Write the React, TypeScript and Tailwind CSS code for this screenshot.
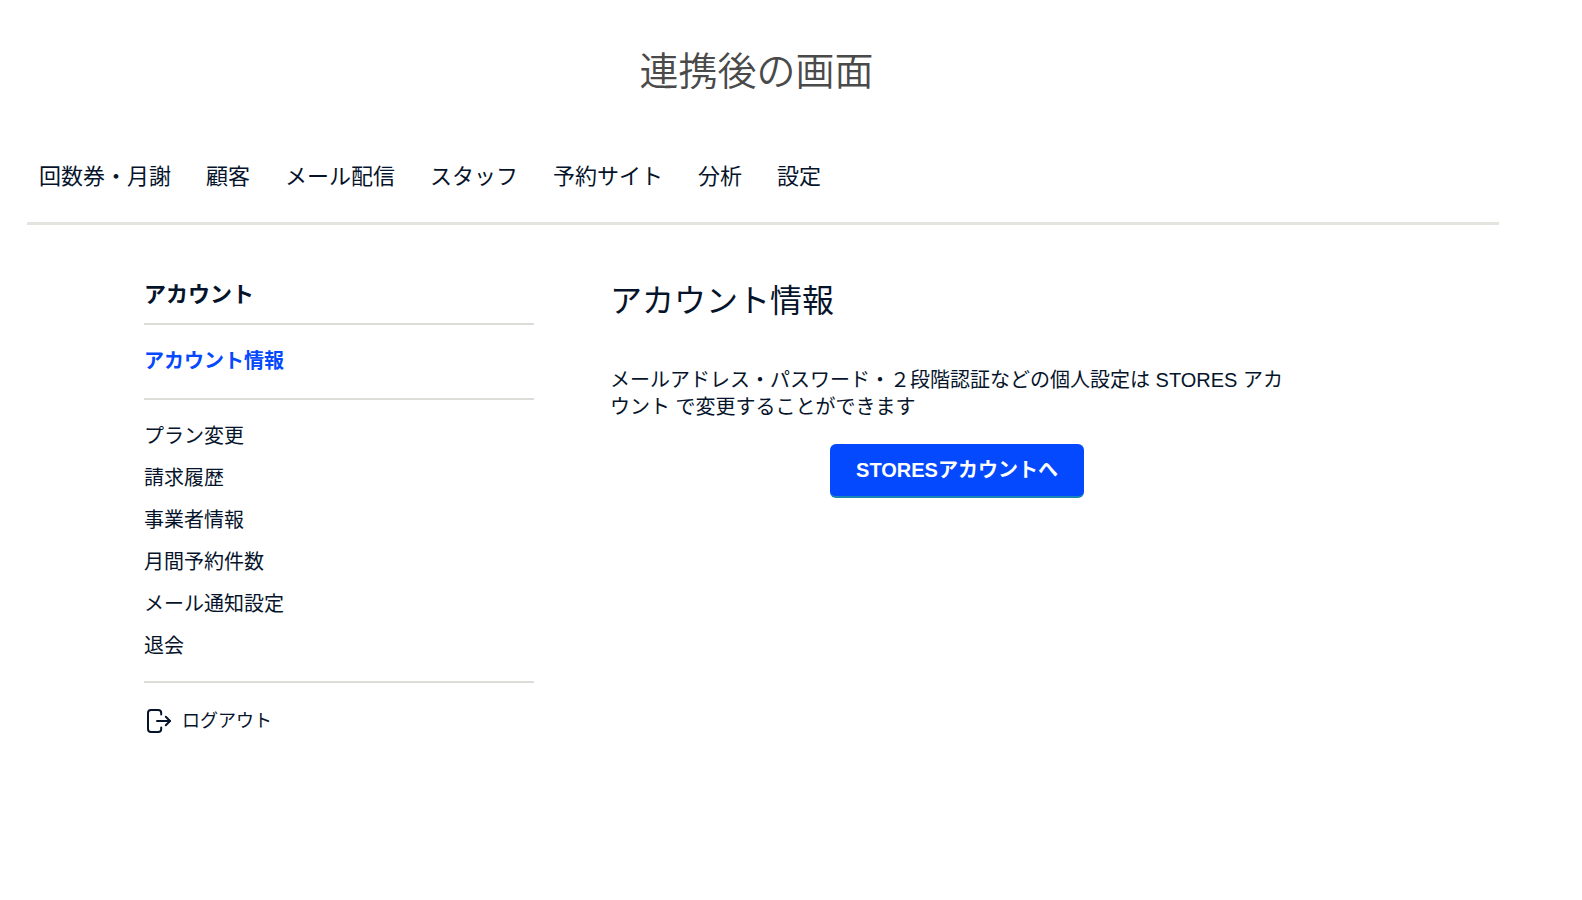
import React from 'react';

const NAV_ITEMS = ['回数券・月謝', '顧客', 'メール配信', 'スタッフ', '予約サイト', '分析', '設定'];

const MENU_ITEMS = ['プラン変更', '請求履歴', '事業者情報', '月間予約件数', 'メール通知設定', '退会'];

function LogoutIcon() {
  return (
    <svg
      aria-hidden="true"
      viewBox="0 0 26 26"
      className="h-[26px] w-[26px] shrink-0"
      fill="none"
      stroke="currentColor"
      strokeWidth="2"
      strokeLinecap="round"
      strokeLinejoin="round"
    >
      <path d="M15.200 6.500V5a3 3 0 0 0-3-3H5a3 3 0 0 0-3 3v16a3 3 0 0 0 3 3h7.200a3 3 0 0 0 3-3v-1.500" />
      <path d="M11 13h13" />
      <path d="M19.800 8.800 24 13l-4.200 4.200" />
    </svg>
  );
}

function Sidebar() {
  return (
    <aside className="w-[390px]">
      <h2 className="border-b-2 border-[#dcddd7] pb-3 text-[22px] leading-8 font-bold">アカウント</h2>
      <div className="border-b-2 border-[#dcddd7] pt-5 pb-[21px]">
        <a href="#account" aria-current="page" className="block text-xl leading-8 font-bold text-[#0549ff]">
          アカウント情報
        </a>
      </div>
      <ul className="border-b-2 border-[#dcddd7] pt-[15px] pb-[14px]">
        {MENU_ITEMS.map((item) => (
          <li key={item}>
            <a href="#menu" className="block text-xl leading-[42px]">
              {item}
            </a>
          </li>
        ))}
      </ul>
      <a href="#logout" className="mt-6 flex items-center gap-[10px] pl-0.5 text-lg leading-7">
        <LogoutIcon />
        ログアウト
      </a>
    </aside>
  );
}

export default function App() {
  return (
    <div className="min-h-screen bg-white pb-10 font-['Liberation_Sans','Noto_Sans_CJK_JP',sans-serif] text-[#06142b]">
      <h1 className="pt-11 pr-[69px] text-center text-[39px] leading-[56px] font-[350] text-[#4a4a4a]">
        連携後の画面
      </h1>

      <nav className="mt-[61px] mr-[83px] ml-[27px] border-b-3 border-[#e3e4de] pb-[29px] pl-3">
        <ul className="flex flex-wrap gap-x-[35px]">
          {NAV_ITEMS.map((item) => (
            <li key={item}>
              <a href="#nav" className="text-[22px] leading-8">
                {item}
              </a>
            </li>
          ))}
        </ul>
      </nav>

      <div className="mt-[54px] flex gap-[76px] pr-10 pl-36">
        <Sidebar />
        <main className="max-w-[694px] flex-1">
          <h2 className="text-[32px] leading-[44px]">アカウント情報</h2>
          <p className="mt-11 pr-5 text-xl leading-[27px]">
            メールアドレス・パスワード・２段階認証などの個人設定は STORES アカウント で変更することができます
          </p>
          <div className="mt-[23px] flex justify-center">
            <button
              type="button"
              className="h-[54px] rounded-md border-b-2 border-[#1a86b8] bg-[#0549ff] px-[26px] text-xl font-bold text-white"
            >
              STORESアカウントへ
            </button>
          </div>
        </main>
      </div>
    </div>
  );
}
